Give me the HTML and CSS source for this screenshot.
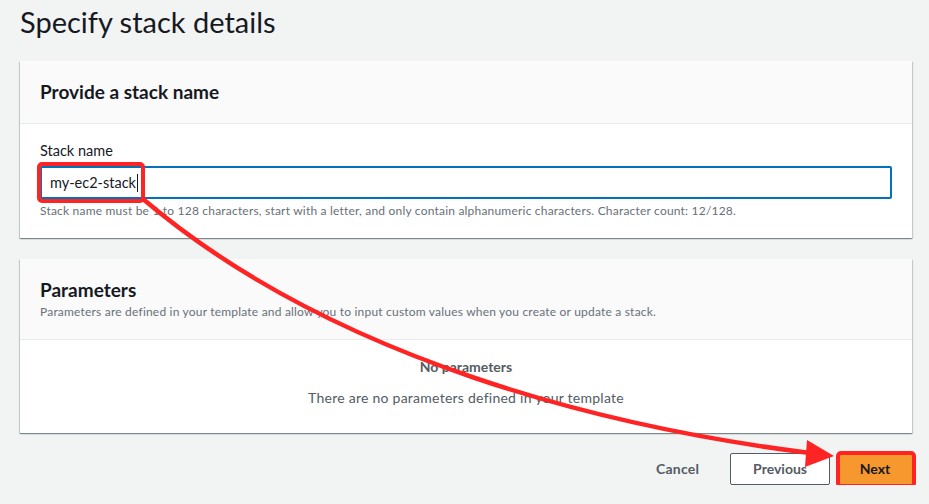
FILE: index.html
```html
<!DOCTYPE html>
<html lang="en">
<head>
<meta charset="utf-8">
<title>Specify stack details</title>
<link rel="stylesheet" href="styles.css">
</head>
<body>
<main class="page">
  <h1 class="title">Specify stack details</h1>

  <section class="card">
    <div class="card-header">
      <h2 class="card-title">Provide a stack name</h2>
    </div>
    <div class="card-body">
      <label class="field-label">Stack name</label>
      <div class="input-wrap">
        <div class="input"><span class="value">my-ec2-stack</span><span class="caret"></span></div>
        <span class="annot annot-input"></span>
      </div>
      <p class="hint">Stack name must be 1 to 128 characters, start with a letter, and only contain alphanumeric characters. Character count: 12/128.</p>
    </div>
  </section>

  <section class="card">
    <div class="card-header card-header-params">
      <h2 class="card-title">Parameters</h2>
      <p class="card-desc">Parameters are defined in your template and allow you to input custom values when you create or update a stack.</p>
    </div>
    <div class="card-body empty">
      <p class="empty-title">No parameters</p>
      <p class="empty-text">There are no parameters defined in your template</p>
    </div>
  </section>

  <div class="actions">
    <button class="btn-link">Cancel</button>
    <button class="btn">Previous</button>
    <span class="next-wrap">
      <button class="btn btn-primary">Next</button>
      <span class="annot annot-next"></span>
    </span>
  </div>
</main>

<svg class="arrow-overlay" width="929" height="504" viewBox="0 0 929 504">
  <path d="M143 199 C 335 362, 612 428, 810 453" fill="none" stroke="#fe2424" stroke-width="4.5" stroke-linecap="round"/>
  <polygon points="807,440 805,467 834,456" fill="#fe2424"/>
</svg>
</body>
</html>
```

FILE: styles.css
```css
* { box-sizing: border-box; }

html, body {
  margin: 0;
  padding: 0;
  background: #f2f3f3;
  font-family: "Lato", "Open Sans", sans-serif;
  color: #16191f;
}

.page {
  width: 929px;
  padding: 0 17px 0 20px;
}

.title {
  margin: 4px 0 21px;
  font-size: 29px;
  line-height: 36px;
  font-weight: 400;
  color: #16191f;
}

.card {
  background: #fff;
  box-shadow: 0 1px 1px 0 rgba(0, 28, 36, 0.3), 1px 1px 1px 0 rgba(0, 28, 36, 0.15), -1px 1px 1px 0 rgba(0, 28, 36, 0.15);
  margin-bottom: 21px;
}

.card-header {
  background: #fafafa;
  border-bottom: 1px solid #eaeded;
  padding: 19px 20px 20px;
}

.card-title {
  margin: 0;
  font-size: 19px;
  line-height: 23px;
  font-weight: 700;
  color: #16191f;
}

.card-header-params {
  padding: 20px 20px 19px;
}

.card-header-params .card-title {
  line-height: 22px;
}

.card-desc {
  margin: 3px 0 0;
  font-size: 12px;
  line-height: 16px;
  letter-spacing: 0.2px;
  color: #687078;
}

.card-body {
  padding: 16px 20px 19px;
}

.field-label {
  display: block;
  font-size: 14.5px;
  line-height: 22px;
  color: #16191f;
  margin-bottom: 4px;
}

.input-wrap {
  position: relative;
}

.input {
  display: flex;
  align-items: center;
  height: 33px;
  border: 2px solid #0073bb;
  border-radius: 2px;
  padding: 0 8px;
  font-size: 14.5px;
  color: #16191f;
}

.caret {
  display: inline-block;
  width: 1px;
  height: 18px;
  margin-left: 1px;
  background: #16191f;
}

.annot {
  position: absolute;
  border: 4px solid #fe2424;
  border-radius: 5px;
  pointer-events: none;
}

.annot-input {
  left: -3px;
  top: -4px;
  width: 108px;
  height: 41px;
}

.hint {
  margin: 4px 0 0;
  font-size: 12px;
  line-height: 16px;
  letter-spacing: 0.2px;
  color: #687078;
}

.empty {
  padding: 17px 20px 25px;
  text-align: center;
  color: #545b64;
}

.empty-title {
  margin: 0;
  font-size: 14px;
  line-height: 20px;
  font-weight: 700;
}

.empty-text {
  margin: 11px 0 0;
  font-size: 14px;
  line-height: 20px;
  letter-spacing: 0.25px;
}

.actions {
  display: flex;
  justify-content: flex-end;
  align-items: center;
  margin-top: -1px;
}

.btn-link,
.btn {
  font-family: inherit;
  font-size: 14px;
  font-weight: 700;
  line-height: 20px;
  height: 32px;
  border-radius: 2px;
  cursor: pointer;
}

.btn-link {
  background: none;
  border: none;
  color: #545b64;
  padding: 0 20px;
  margin-right: 11px;
  letter-spacing: 0.2px;
}

.btn {
  background: #fff;
  border: 1px solid #545b64;
  color: #545b64;
  padding: 0 22px;
}

.next-wrap {
  position: relative;
  display: inline-flex;
  margin-left: 8px;
}

.btn-primary {
  background: #f7982f;
  border: 1px solid #f7982f;
  color: #16191f;
  width: 74px;
  padding: 0;
}

.annot-next {
  left: -2px;
  top: -2px;
  right: -4px;
  bottom: -3px;
}

.arrow-overlay {
  position: absolute;
  left: 0;
  top: 0;
  pointer-events: none;
}
```
